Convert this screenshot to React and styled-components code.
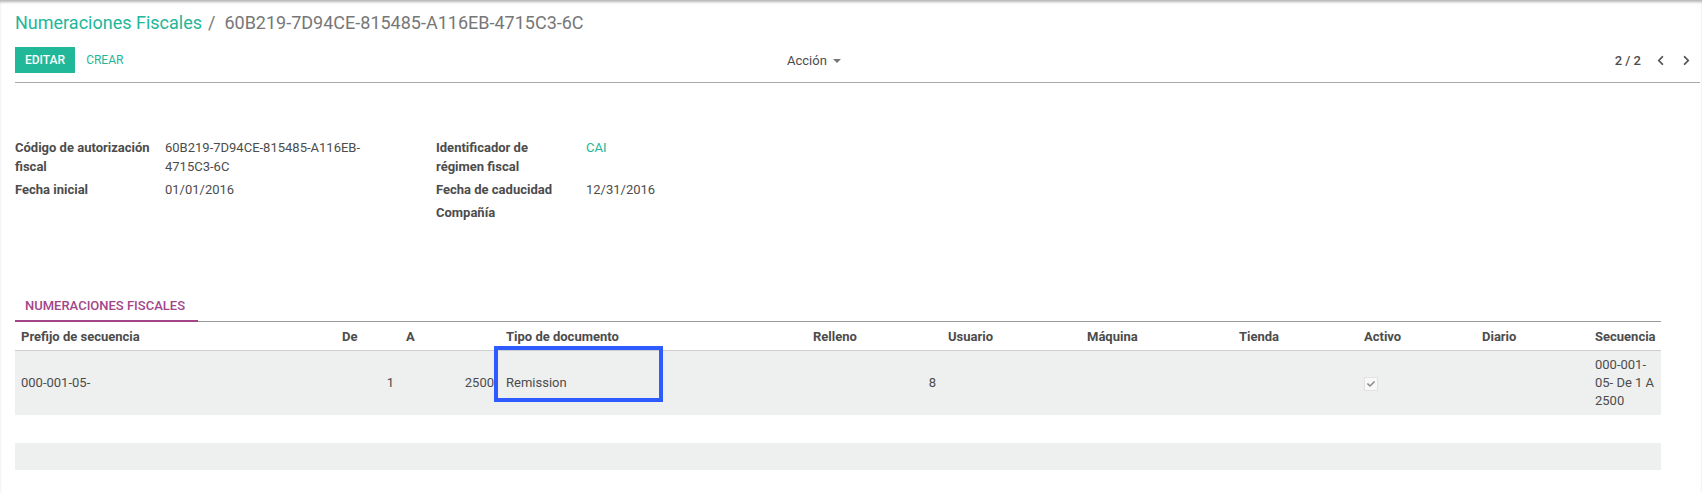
import React from 'react'
import styled, { createGlobalStyle } from 'styled-components'
import { FaChevronLeft, FaChevronRight, FaCheck } from 'react-icons/fa'

const GlobalStyle = createGlobalStyle`
body {
  margin: 0;
  background: #fff;
  font-family: Roboto, "Liberation Sans", sans-serif;
  font-size: 13px;
  color: #4c4c4c;
}
`

const Page = styled.div`
min-height: 493px;
box-shadow: inset 0 3px 3px -1px rgba(0,0,0,0.3);
`

const ControlPanel = styled.div`
margin: 0 2px 0 15px;
border-bottom: 1px solid #a9a9a9;
`

const Breadcrumb = styled.div`
height: 44px;
display: flex;
align-items: center;
font-size: 18px;
padding-top: 1px;
box-sizing: border-box;
`

const Crumb = styled.span`
color: #21b799;
`

const Sep = styled.span`
color: #777;
padding: 0 9px 0 6px;
`

const Current = styled.span`
color: #777;
`

const ButtonRow = styled.div`
display: flex;
align-items: center;
height: 26px;
padding: 3px 0 9px;
`

const LeftButtons = styled.div`
display: flex;
align-items: center;
width: 772px;
`

const PrimaryButton = styled.button`
height: 26px;
padding: 0 10px;
border: none;
border-radius: 0;
background: #21b799;
color: #fff;
font-family: inherit;
font-size: 12px;
font-weight: 500;
`

const LinkButton = styled.button`
height: 26px;
padding: 0 11px;
border: none;
background: none;
color: #21b799;
font-family: inherit;
font-size: 12px;
`

const Dropdown = styled.div`
display: flex;
align-items: center;
gap: 6px;
color: #4c4c4c;
`

const Caret = styled.span`
width: 0;
height: 0;
border-left: 4px solid transparent;
border-right: 4px solid transparent;
border-top: 4px solid #777;
margin-top: 2px;
`

const Pager = styled.div`
margin-left: auto;
display: flex;
align-items: center;
padding-right: 1px;
`

const PagerValue = styled.span`
margin-right: 6px;
color: #4c4c4c;
font-weight: 500;
`

const PagerButton = styled.span`
display: flex;
align-items: center;
justify-content: center;
width: 26px;
color: #555;
`

const Form = styled.div`
margin: 55px 0 0 15px;
display: grid;
grid-template-columns: 421px auto;
`

const Group = styled.div`
display: grid;
grid-template-columns: 150px 230px;
row-gap: 4px;
line-height: 19px;
align-content: start;
`

const Label = styled.div`
font-weight: 700;
color: #4c4c4c;
padding-right: 10px;
`

const Value = styled.div`
color: ${p => (p.$link ? '#21b799' : '#4c4c4c')};
`

const Notebook = styled.div`
margin: 70px 41px 0 15px;
`

const Tabs = styled.div`
display: flex;
border-bottom: 1px solid #9a9a9a;
`

const Tab = styled.div`
height: 28px;
line-height: 28px;
padding: 0 13px 0 10px;
margin-bottom: -1px;
border-bottom: 2px solid #a24689;
color: #a24689;
font-weight: 500;
text-transform: uppercase;
`

const Table = styled.table`
width: 100%;
border-collapse: collapse;
table-layout: fixed;
`

const Col = styled.col`
width: ${p => p.$w}px;
`

const Th = styled.th`
height: 28px;
padding: 0 6px;
text-align: left;
font-weight: 700;
color: #4c4c4c;
border-bottom: 1px solid #cfcfcf;
white-space: nowrap;
`

const Row = styled.tr`
height: ${p => p.$h}px;
background: ${p => (p.$shaded ? '#eeefef' : '#fff')};
`

const Td = styled.td`
position: relative;
padding: 5px 6px;
line-height: 18px;
vertical-align: middle;
text-align: ${p => (p.$num ? 'right' : 'left')};
`

const Highlight = styled.span`
position: absolute;
left: -6px;
top: -5px;
width: 169px;
height: 56px;
box-sizing: border-box;
border: 4px solid #2d5bff;
`

const Checkbox = styled.span`
display: inline-flex;
align-items: center;
justify-content: center;
width: 14px;
height: 14px;
box-sizing: border-box;
border: 1px solid #e2e2e2;
background: #f8f8f8;
color: #8a8a8a;
vertical-align: middle;
`

const columns = [
  ['Prefijo de secuencia', 321],
  ['De', 64],
  ['A', 100],
  ['Tipo de documento', 307],
  ['Relleno', 135],
  ['Usuario', 139],
  ['Máquina', 152],
  ['Tienda', 125],
  ['Activo', 118],
  ['Diario', 113],
  ['Secuencia', 72],
]

export default function App() {
  return (
    <Page>
      <GlobalStyle />
      <ControlPanel>
        <Breadcrumb>
          <Crumb>Numeraciones Fiscales</Crumb>
          <Sep>/</Sep>
          <Current>60B219-7D94CE-815485-A116EB-4715C3-6C</Current>
        </Breadcrumb>
        <ButtonRow>
          <LeftButtons>
            <PrimaryButton>EDITAR</PrimaryButton>
            <LinkButton>CREAR</LinkButton>
          </LeftButtons>
          <Dropdown>
            Acción <Caret />
          </Dropdown>
          <Pager>
            <PagerValue>2 / 2</PagerValue>
            <PagerButton><FaChevronLeft size={11} /></PagerButton>
            <PagerButton><FaChevronRight size={11} /></PagerButton>
          </Pager>
        </ButtonRow>
      </ControlPanel>

      <Form>
        <Group>
          <Label>Código de autorización fiscal</Label>
          <Value>60B219-7D94CE-815485-A116EB-4715C3-6C</Value>
          <Label>Fecha inicial</Label>
          <Value>01/01/2016</Value>
        </Group>
        <Group>
          <Label>Identificador de régimen fiscal</Label>
          <Value $link>CAI</Value>
          <Label>Fecha de caducidad</Label>
          <Value>12/31/2016</Value>
          <Label>Compañía</Label>
          <Value />
        </Group>
      </Form>

      <Notebook>
        <Tabs>
          <Tab>Numeraciones Fiscales</Tab>
        </Tabs>
        <Table>
          <colgroup>
            {columns.map(([name, w]) => <Col key={name} $w={w} />)}
          </colgroup>
          <thead>
            <tr>
              {columns.map(([name]) => <Th key={name}>{name}</Th>)}
            </tr>
          </thead>
          <tbody>
            <Row $h={64} $shaded>
              <Td>000-001-05-</Td>
              <Td $num>1</Td>
              <Td $num>2500</Td>
              <Td>Remission<Highlight /></Td>
              <Td $num>8</Td>
              <Td />
              <Td />
              <Td />
              <Td><Checkbox><FaCheck size={8} /></Checkbox></Td>
              <Td />
              <Td>000-001-05- De 1 A 2500</Td>
            </Row>
            <Row $h={28}>
              <Td colSpan={11} />
            </Row>
            <Row $h={27} $shaded>
              <Td colSpan={11} />
            </Row>
          </tbody>
        </Table>
      </Notebook>
    </Page>
  )
}
